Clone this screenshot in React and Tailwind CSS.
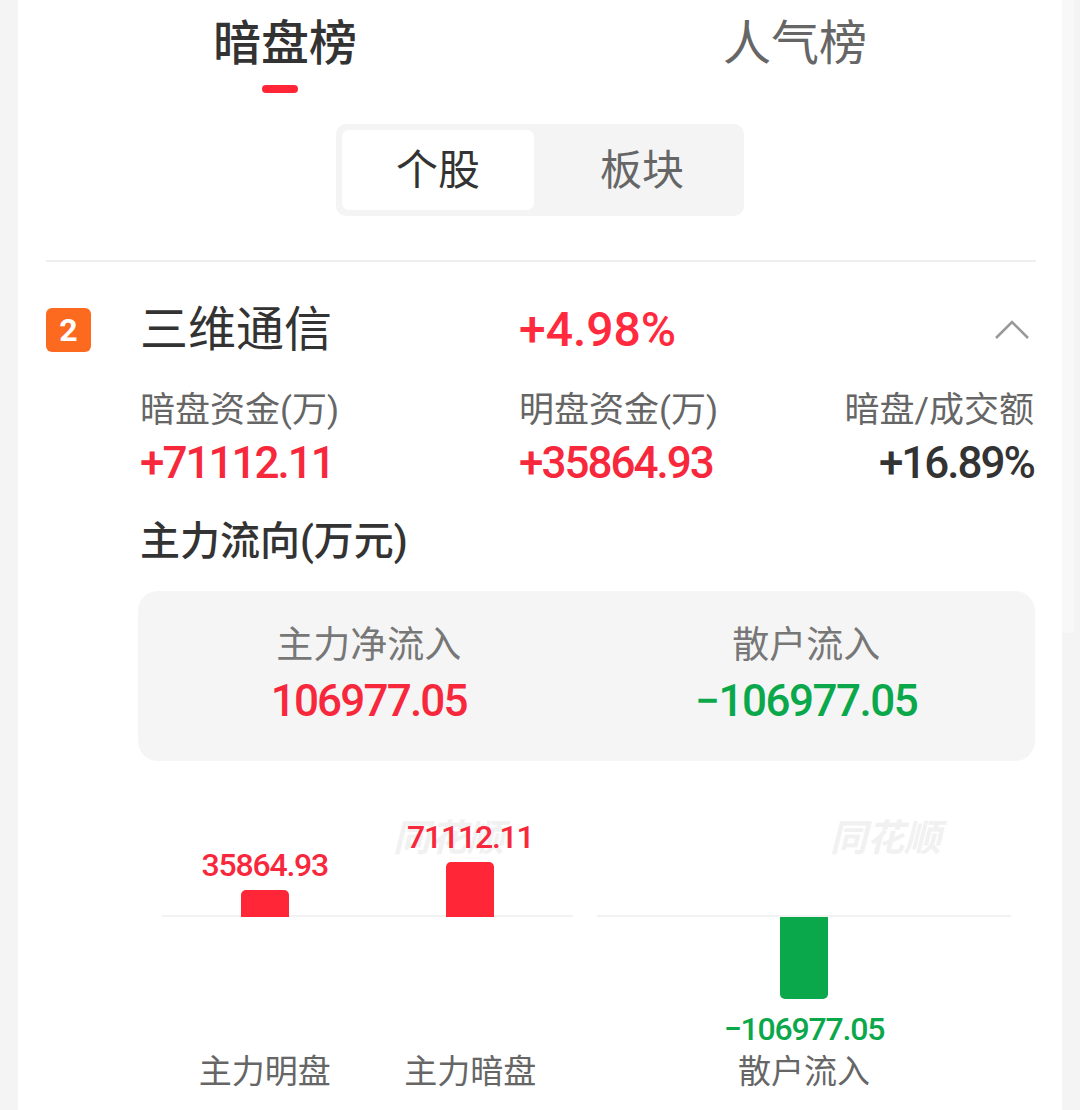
export default function App() {
  const F = "font-['Roboto','Noto_Sans_CJK_SC',sans-serif]";
  const max = 106977.05;
  const scale = 82 / max;
  const Col = ({ value, label }) => (
    <div className="flex-1 flex flex-col items-center justify-end">
      <div className="text-[32px] leading-[36px] font-medium text-[#f7283c] tracking-[-1.2px]">{label}</div>
      <div
        className="mt-[7px] w-[48px] rounded-t-[5px] bg-[#ff2638] -mb-[2px]"
        style={{ height: Math.round(value * scale) + 'px' }}
      />
    </div>
  );
  return (
    <div className={`w-[1080px] h-[1110px] bg-[#f4f4f4] flex overflow-hidden ${F}`}>
      <div className="w-[18px] shrink-0" />
      <div className="w-[1044px] shrink-0 bg-white flex flex-col">
        {/* top tabs */}
        <div className="flex pl-[12px] pt-[14px]">
          <div className="w-[510px] flex flex-col items-center">
            <div className="h-[60px] leading-[60px] text-[48px] text-[#333] font-medium">暗盘榜</div>
            <div className="mt-[11px] -ml-[10px] w-[36px] h-[8px] rounded-full bg-[#ff2436]" />
          </div>
          <div className="w-[510px] flex flex-col items-center">
            <div className="h-[60px] leading-[60px] text-[48px] text-[#666]">人气榜</div>
          </div>
        </div>

        {/* segmented control */}
        <div className="mx-auto mt-[31px] w-[408px] h-[92px] p-[6px] rounded-[10px] bg-[#f4f4f4] flex">
          <div className="w-[192px] h-[80px] rounded-[7px] bg-white flex items-center justify-center text-[42px] text-[#333]">个股</div>
          <div className="flex-1 h-[80px] pl-[12px] flex items-center justify-center text-[42px] text-[#666]">板块</div>
        </div>

        {/* divider */}
        <div className="ml-[28px] w-[990px] mt-[44px] h-[2px] bg-[#efefef]" />

        {/* stock row */}
        <div className="mt-[38px] h-[60px] flex items-center pl-[28px] pr-[27px]">
          <div className="w-[45px] h-[44px] rounded-[6px] bg-[#fc6a20] text-white text-[32px] font-bold flex items-center justify-center leading-none">2</div>
          <div className="ml-[49px] w-[379px] text-[48px] leading-[60px] text-[#333]">三维通信</div>
          <div className="flex-1 text-[48px] leading-[60px] font-medium text-[#ff2a3d]">+4.98%</div>
          <svg width="36" height="20" viewBox="0 0 36 20" className="mr-[5px]">
            <polyline points="2,18 18,2 34,18" fill="none" stroke="#999" strokeWidth="2.6" />
          </svg>
        </div>

        {/* labels */}
        <div className="mt-[28px] ml-[122px] mr-[28px] flex text-[35px] leading-[46px] text-[#666]">
          <div className="w-[379px]">暗盘资金(万)</div>
          <div className="flex-1">明盘资金(万)</div>
          <div className="text-right">暗盘/成交额</div>
        </div>
        <div className="mt-[4px] ml-[122px] mr-[28px] flex text-[44px] leading-[50px] font-medium tracking-[-2px]">
          <div className="w-[379px] text-[#f7283c]">+71112.11</div>
          <div className="flex-1 text-[#f7283c]">+35864.93</div>
          <div className="text-right text-[#333]">+16.89%</div>
        </div>

        {/* main flow title */}
        <div className="mt-[28px] ml-[122px] text-[40px] leading-[52px] font-medium text-[#333]">主力流向(万元)</div>

        {/* summary box */}
        <div className="mt-[23px] ml-[120px] w-[897px] h-[170px] rounded-[20px] bg-[#f5f5f5] flex">
          <div className="flex-1 flex flex-col items-center pt-[32px] pl-[12px]">
            <div className="text-[37px] leading-[46px] text-[#777]">主力净流入</div>
            <div className="mt-[7px] text-[44px] leading-[50px] font-medium tracking-[-1.8px] text-[#f7283c]">106977.05</div>
          </div>
          <div className="flex-1 flex flex-col items-center pt-[32px] pr-[10px]">
            <div className="text-[37px] leading-[46px] text-[#777]">散户流入</div>
            <div className="mt-[7px] text-[44px] leading-[50px] font-medium tracking-[-1.5px] text-[#0aa84b]">−106977.05</div>
          </div>
        </div>

        {/* chart */}
        <div className="mt-[29px] ml-[144px] flex gap-[24px]">
          <div className="relative w-[411px] flex flex-col">
            <div className="absolute left-[231px] top-[27px] text-[37px] leading-[44px] font-bold italic text-[#f1f1f1] select-none">同花顺</div>
            <div className="relative h-[127px] border-b-2 border-[#f2f2f2] flex">
              <Col value={35864.93} label="35864.93" />
              <Col value={71112.11} label="71112.11" />
            </div>
            <div className="h-[135px]" />
            <div className="flex text-[33px] leading-[40px] text-[#666]">
              <div className="flex-1 text-center">主力明盘</div>
              <div className="flex-1 text-center">主力暗盘</div>
            </div>
          </div>
          <div className="relative w-[414px] flex flex-col">
            <div className="absolute left-[233px] top-[27px] text-[37px] leading-[44px] font-bold italic text-[#f1f1f1] select-none">同花顺</div>
            <div className="relative h-[127px] border-b-2 border-[#f2f2f2]" />
            <div className="relative h-[135px] flex flex-col items-center">
              <div className="w-[48px] rounded-b-[5px] bg-[#0aa84b]" style={{ height: Math.round(max * scale) + 'px' }} />
              <div className="mt-[12px] text-[32px] leading-[36px] font-medium text-[#0aa84b] tracking-[-1.2px]">−106977.05</div>
            </div>
            <div className="flex text-[33px] leading-[40px] text-[#666]">
              <div className="flex-1 text-center">散户流入</div>
            </div>
          </div>
        </div>
      </div>
      <div className="w-[18px] shrink-0 flex">
        <div className="w-[12px] h-[633px] bg-[#f8f8f8]" />
      </div>
    </div>
  );
}
